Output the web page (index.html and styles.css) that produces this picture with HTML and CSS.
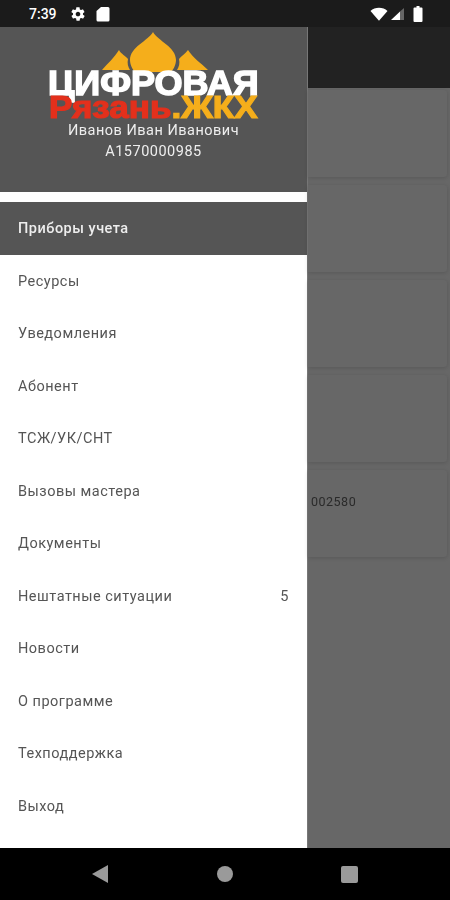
FILE: index.html
```html
<!DOCTYPE html><html lang="ru">
<head>
  <meta charset="UTF-8" />
  <meta name="viewport" content="width=device-width, initial-scale=1.0" />
  <title>Цифровая Рязань.ЖКХ</title>
  <link rel="stylesheet" href="styles.css">
</head>
<body>
  <div class="screen">
    <div class="status-bar">
      <div class="status-left">
        <span class="time">7:39</span>
        <svg class="ico" width="16" height="16" viewBox="0 0 24 24"><path fill="#fff" d="M19.4 13c.1-.3.1-.7.1-1s0-.7-.1-1l2.100-1.600c.2-.2.2-.4.1-.6l-2-3.500c-.1-.2-.4-.3-.6-.2l-2.500 1c-.5-.4-1.100-.7-1.700-1l-.4-2.600c0-.3-.2-.5-.5-.5h-4c-.3 0-.5.200-.5.500l-.4 2.600c-.6.300-1.200.600-1.700 1l-2.500-1c-.2-.1-.5 0-.6.200l-2 3.500c-.1.200-.1.400.1.600L4.600 11c-.1.300-.1.700-.1 1s0 .7.100 1l-2.100 1.600c-.2.200-.2.400-.1.600l2 3.500c.1.200.4.300.6.200l2.500-1c.5.400 1.100.700 1.700 1l.4 2.600c0 .3.200.5.500.5h4c.3 0 .5-.2.500-.5l.4-2.600c.6-.3 1.200-.6 1.700-1l2.500 1c.2.100.5 0 .6-.2l2-3.500c.1-.2.100-.4-.1-.6L19.400 13zM12 15.500c-1.900 0-3.500-1.600-3.500-3.500s1.600-3.500 3.500-3.500 3.500 1.600 3.500 3.500-1.600 3.500-3.500 3.500z"/></svg>
        <svg class="ico" width="14" height="16" viewBox="0 0 14 16"><path fill="#fff" d="M5 1h7a1.500 1.500 0 0 1 1.500 1.500v11.500a1.500 1.500 0 0 1-1.500 1.500h-10a1.500 1.500 0 0 1-1.500-1.500v-9z"/></svg>
      </div>
      <div class="status-right">
        <svg class="wifi" width="18" height="14" viewBox="0 0 19 14"><path fill="#fff" d="M9.500 14 0.500 3.800C3 1.600 6 .5 9.500.5s6.500 1.100 9 3.300z"/></svg>
        <svg class="signal" width="15" height="14" viewBox="0 0 15 14"><path fill="#666" d="M14 1v12h-4V4.500z"/><path fill="#fff" d="M10 4.500V13H1z"/></svg>
        <svg width="10" height="16" viewBox="0 0 10 16"><path fill="#fff" d="M3.500 0h3v1.500h2a1 1 0 0 1 1 1V15a1 1 0 0 1-1 1h-7a1 1 0 0 1-1-1V2.500a1 1 0 0 1 1-1h2z"/></svg>
      </div>
    </div>

    <div class="main">
      <aside class="drawer">
        <div class="drawer-head">
          <div class="logo">
            <svg class="domes" width="110" height="40" viewBox="0 0 110 40">
              <path fill="#f5ae1b" d="M53 0C58 9 76 15 76 28C76 33 73 38 71 40H35C33 38 30 33 30 28C30 15 48 9 53 0z"/>
              <path fill="#f5ae1b" d="M19 18C21 22 26 24 28 27C27 31 28 35 30 38H2C8 31 14 26 19 18z"/>
              <path fill="#f5ae1b" d="M88 18C85 22 81 24 79 27C80 31 79 35 77 38H108C101 31 93 26 88 18z"/>
            </svg>
            <div class="logo-top">ЦИФРОВАЯ</div>
            <div class="logo-bottom"><span class="logo-red">Рязань</span><span class="logo-gold">.ЖКХ</span></div>
          </div>
          <div class="user">Иванов Иван Иванович</div>
          <div class="user">А1570000985</div>
        </div>
        <div class="gap"></div>
        <div class="menu-item active">Приборы учета</div>
        <div class="menu-item">Ресурсы</div>
        <div class="menu-item">Уведомления</div>
        <div class="menu-item">Абонент</div>
        <div class="menu-item">ТСЖ/УК/СНТ</div>
        <div class="menu-item">Вызовы мастера</div>
        <div class="menu-item">Документы</div>
        <div class="menu-item">Нештатные ситуации <span class="count">5</span></div>
        <div class="menu-item">Новости</div>
        <div class="menu-item">О программе</div>
        <div class="menu-item">Техподдержка</div>
        <div class="menu-item">Выход</div>
      </aside>

      <div class="behind">
        <div class="appbar"></div>
        <div class="cards">
          <div class="card"></div>
          <div class="card"></div>
          <div class="card"></div>
          <div class="card"></div>
          <div class="card last">002580</div>
        </div>
      </div>
    </div>

    <div class="nav-bar">
      <svg width="16" height="18" viewBox="0 0 16 18"><path fill="#9a9a9a" d="M16 0v18L0 9z"/></svg>
      <div class="nav-circle"></div>
      <div class="nav-square"></div>
    </div>
  </div>
</body>
</html>
```

FILE: styles.css
```css
body {
  margin: 0;
  font-family: Roboto, sans-serif;
  background: #000;
}
.screen {
  width: 450px;
  height: 900px;
  display: flex;
  flex-direction: column;
  overflow: hidden;
  filter: blur(0.5px);
}
.status-bar {
  height: 27px;
  background: #1b1b1b;
  display: flex;
  justify-content: space-between;
  align-items: center;
  padding: 0 27px 0 29px;
  color: #fff;
  flex-shrink: 0;
}
.status-left {
  display: flex;
  align-items: center;
}
.time {
  font-size: 14px;
  font-weight: 500;
  margin-right: 13px;
}
.status-left .ico {
  margin-right: 10px;
}
.status-right {
  display: flex;
  align-items: center;
}
.wifi {
  margin-right: 2px;
}
.signal {
  margin-right: 8px;
}
.main {
  flex: 1;
  display: flex;
  min-height: 0;
}
.drawer {
  width: 307px;
  background: #fff;
  flex-shrink: 0;
}
.drawer-head {
  height: 165px;
  background: #555;
  color: #eee;
  text-align: center;
  box-sizing: border-box;
  padding-top: 5px;
}
.logo {
  display: flex;
  flex-direction: column;
  align-items: center;
  height: 89px;
  font-family: "Liberation Sans", Arial, sans-serif;
  font-weight: 700;
}
.domes {
  display: block;
  margin-left: 2px;
  flex-shrink: 0;
}
.logo-top {
  margin-top: -2px;
  font-size: 35px;
  line-height: 26px;
  color: #fff;
  -webkit-text-stroke: 1.5px #fff;
  transform: scaleX(1.03);
  white-space: nowrap;
}
.logo-bottom {
  font-size: 31px;
  line-height: 24px;
  -webkit-text-stroke: 1.2px;
  white-space: nowrap;
  transform: scaleX(1.13);
}
.logo-red {
  color: #e3301c;
}
.logo-gold {
  color: #f5ae1b;
}
.user {
  font-size: 14.5px;
  line-height: 20.5px;
  letter-spacing: 0.5px;
}
.gap {
  height: 10px;
  background: #fff;
}
.menu-item {
  height: 52.5px;
  box-sizing: border-box;
  display: flex;
  align-items: center;
  justify-content: space-between;
  padding: 1px 18px 0;
  font-size: 14.5px;
  letter-spacing: 0.5px;
  color: #555;
}
.menu-item.active {
  background: #555;
  color: #eee;
  font-weight: 500;
}
.count {
  color: #555;
}
.behind {
  flex: 1;
  background: #676767;
  border-left: 1px solid #777;
}
.appbar {
  height: 61px;
  background: #222;
}
.cards {
  padding: 2px 3px 0 0;
}
.card {
  background: #676767;
  border-radius: 0 3px 3px 0;
  box-shadow: 0 1px 4px rgba(0, 0, 0, 0.15);
  margin-bottom: 8px;
  height: 87px;
}
.last {
  font-size: 12.5px;
  letter-spacing: 0.5px;
  color: #2a2a2a;
  padding: 24px 0 0 3px;
  box-sizing: border-box;
}
.nav-bar {
  height: 52px;
  background: #000;
  display: flex;
  align-items: center;
  justify-content: space-between;
  padding: 0 92px;
  flex-shrink: 0;
}
.nav-circle {
  width: 16px;
  height: 16px;
  border-radius: 50%;
  background: #9a9a9a;
}
.nav-square {
  width: 17px;
  height: 17px;
  border-radius: 2px;
  background: #9a9a9a;
}
```
